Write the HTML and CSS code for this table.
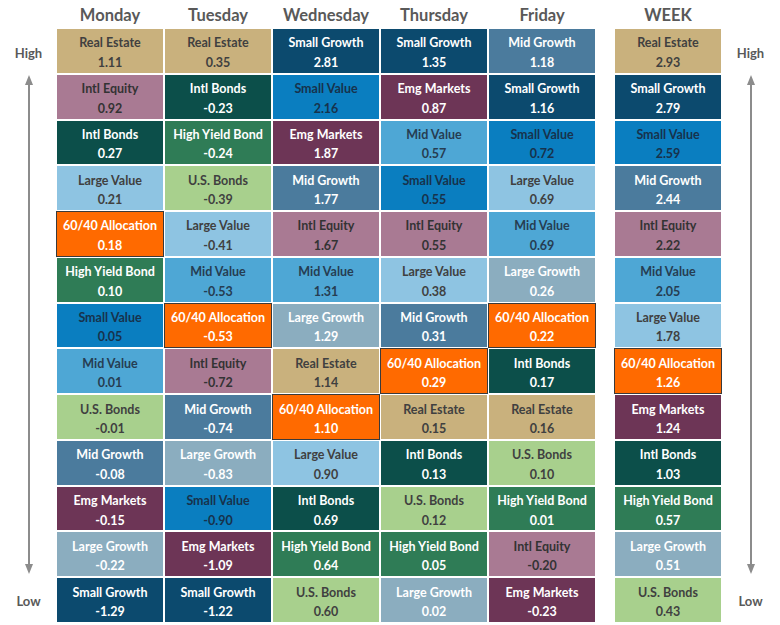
FILE: index.html
```html
<!DOCTYPE html>
<html>
<head>
<meta charset="utf-8">
<link rel="stylesheet" href="styles.css">
</head>
<body>
<div class="board">
  <div class="side">
    <div class="side-label">High</div>
    <div class="arrow"><span class="head up"></span><span class="shaft"></span><span class="head down"></span></div>
    <div class="side-label">Low</div>
  </div>
  <div class="days">
    <div class="col">
      <div class="hdr">Monday</div>
      <div class="cells">
        <div class="cell re"><span>Real Estate</span><span>1.11</span></div>
        <div class="cell ie"><span>Intl Equity</span><span>0.92</span></div>
        <div class="cell ib"><span>Intl Bonds</span><span>0.27</span></div>
        <div class="cell lv"><span>Large Value</span><span>0.21</span></div>
        <div class="cell al"><span>60/40 Allocation</span><span>0.18</span></div>
        <div class="cell hy"><span>High Yield Bond</span><span>0.10</span></div>
        <div class="cell sv"><span>Small Value</span><span>0.05</span></div>
        <div class="cell mv"><span>Mid Value</span><span>0.01</span></div>
        <div class="cell us"><span>U.S. Bonds</span><span>-0.01</span></div>
        <div class="cell mg"><span>Mid Growth</span><span>-0.08</span></div>
        <div class="cell em"><span>Emg Markets</span><span>-0.15</span></div>
        <div class="cell lg"><span>Large Growth</span><span>-0.22</span></div>
        <div class="cell sg"><span>Small Growth</span><span>-1.29</span></div>
      </div>
    </div>
    <div class="col">
      <div class="hdr">Tuesday</div>
      <div class="cells">
        <div class="cell re"><span>Real Estate</span><span>0.35</span></div>
        <div class="cell ib"><span>Intl Bonds</span><span>-0.23</span></div>
        <div class="cell hy"><span>High Yield Bond</span><span>-0.24</span></div>
        <div class="cell us"><span>U.S. Bonds</span><span>-0.39</span></div>
        <div class="cell lv"><span>Large Value</span><span>-0.41</span></div>
        <div class="cell mv"><span>Mid Value</span><span>-0.53</span></div>
        <div class="cell al"><span>60/40 Allocation</span><span>-0.53</span></div>
        <div class="cell ie"><span>Intl Equity</span><span>-0.72</span></div>
        <div class="cell mg"><span>Mid Growth</span><span>-0.74</span></div>
        <div class="cell lg"><span>Large Growth</span><span>-0.83</span></div>
        <div class="cell sv"><span>Small Value</span><span>-0.90</span></div>
        <div class="cell em"><span>Emg Markets</span><span>-1.09</span></div>
        <div class="cell sg"><span>Small Growth</span><span>-1.22</span></div>
      </div>
    </div>
    <div class="col">
      <div class="hdr">Wednesday</div>
      <div class="cells">
        <div class="cell sg"><span>Small Growth</span><span>2.81</span></div>
        <div class="cell sv"><span>Small Value</span><span>2.16</span></div>
        <div class="cell em"><span>Emg Markets</span><span>1.87</span></div>
        <div class="cell mg"><span>Mid Growth</span><span>1.77</span></div>
        <div class="cell ie"><span>Intl Equity</span><span>1.67</span></div>
        <div class="cell mv"><span>Mid Value</span><span>1.31</span></div>
        <div class="cell lg"><span>Large Growth</span><span>1.29</span></div>
        <div class="cell re"><span>Real Estate</span><span>1.14</span></div>
        <div class="cell al"><span>60/40 Allocation</span><span>1.10</span></div>
        <div class="cell lv"><span>Large Value</span><span>0.90</span></div>
        <div class="cell ib"><span>Intl Bonds</span><span>0.69</span></div>
        <div class="cell hy"><span>High Yield Bond</span><span>0.64</span></div>
        <div class="cell us"><span>U.S. Bonds</span><span>0.60</span></div>
      </div>
    </div>
    <div class="col">
      <div class="hdr">Thursday</div>
      <div class="cells">
        <div class="cell sg"><span>Small Growth</span><span>1.35</span></div>
        <div class="cell em"><span>Emg Markets</span><span>0.87</span></div>
        <div class="cell mv"><span>Mid Value</span><span>0.57</span></div>
        <div class="cell sv"><span>Small Value</span><span>0.55</span></div>
        <div class="cell ie"><span>Intl Equity</span><span>0.55</span></div>
        <div class="cell lv"><span>Large Value</span><span>0.38</span></div>
        <div class="cell mg"><span>Mid Growth</span><span>0.31</span></div>
        <div class="cell al"><span>60/40 Allocation</span><span>0.29</span></div>
        <div class="cell re"><span>Real Estate</span><span>0.15</span></div>
        <div class="cell ib"><span>Intl Bonds</span><span>0.13</span></div>
        <div class="cell us"><span>U.S. Bonds</span><span>0.12</span></div>
        <div class="cell hy"><span>High Yield Bond</span><span>0.05</span></div>
        <div class="cell lg"><span>Large Growth</span><span>0.02</span></div>
      </div>
    </div>
    <div class="col">
      <div class="hdr">Friday</div>
      <div class="cells">
        <div class="cell mg"><span>Mid Growth</span><span>1.18</span></div>
        <div class="cell sg"><span>Small Growth</span><span>1.16</span></div>
        <div class="cell sv"><span>Small Value</span><span>0.72</span></div>
        <div class="cell lv"><span>Large Value</span><span>0.69</span></div>
        <div class="cell mv"><span>Mid Value</span><span>0.69</span></div>
        <div class="cell lg"><span>Large Growth</span><span>0.26</span></div>
        <div class="cell al"><span>60/40 Allocation</span><span>0.22</span></div>
        <div class="cell ib"><span>Intl Bonds</span><span>0.17</span></div>
        <div class="cell re"><span>Real Estate</span><span>0.16</span></div>
        <div class="cell us"><span>U.S. Bonds</span><span>0.10</span></div>
        <div class="cell hy"><span>High Yield Bond</span><span>0.01</span></div>
        <div class="cell ie"><span>Intl Equity</span><span>-0.20</span></div>
        <div class="cell em"><span>Emg Markets</span><span>-0.23</span></div>
      </div>
    </div>
  </div>
  <div class="col week">
    <div class="hdr">WEEK</div>
    <div class="cells">
      <div class="cell re"><span>Real Estate</span><span>2.93</span></div>
      <div class="cell sg"><span>Small Growth</span><span>2.79</span></div>
      <div class="cell sv"><span>Small Value</span><span>2.59</span></div>
      <div class="cell mg"><span>Mid Growth</span><span>2.44</span></div>
      <div class="cell ie"><span>Intl Equity</span><span>2.22</span></div>
      <div class="cell mv"><span>Mid Value</span><span>2.05</span></div>
      <div class="cell lv"><span>Large Value</span><span>1.78</span></div>
      <div class="cell al"><span>60/40 Allocation</span><span>1.26</span></div>
      <div class="cell em"><span>Emg Markets</span><span>1.24</span></div>
      <div class="cell ib"><span>Intl Bonds</span><span>1.03</span></div>
      <div class="cell hy"><span>High Yield Bond</span><span>0.57</span></div>
      <div class="cell lg"><span>Large Growth</span><span>0.51</span></div>
      <div class="cell us"><span>U.S. Bonds</span><span>0.43</span></div>
    </div>
  </div>
  <div class="side">
    <div class="side-label">High</div>
    <div class="arrow"><span class="head up"></span><span class="shaft"></span><span class="head down"></span></div>
    <div class="side-label">Low</div>
  </div>
</div>
</body>
</html>
```

FILE: styles.css
```css
* { box-sizing: border-box; }
html, body { margin: 0; padding: 0; background: #fff; }
body {
  width: 780px;
  height: 625px;
  font-family: Lato, "Open Sans", "Liberation Sans", sans-serif;
  font-weight: 700;
  color: #595959;
}
.board {
  display: flex;
  align-items: flex-start;
}
.side {
  width: 57px;
  flex: none;
  height: 622px;
  padding-top: 29px;
  display: flex;
  flex-direction: column;
  align-items: center;
}
.board > .side:last-child { width: 59px; }
.side-label {
  height: 45px;
  flex: none;
  display: flex;
  align-items: center;
  justify-content: center;
  font-size: 13px;
  color: #595959;
  padding-top: 2px;
}
.arrow {
  flex: 1;
  display: flex;
  flex-direction: column;
  align-items: center;
  padding: 1px 0 3px;
}
.shaft {
  flex: 1;
  width: 2px;
  background: #8c8c8c;
}
.head {
  width: 0;
  height: 0;
  border-left: 4.5px solid transparent;
  border-right: 4.5px solid transparent;
}
.head.up { border-bottom: 10px solid #8c8c8c; }
.head.down { border-top: 10px solid #8c8c8c; }
.days {
  display: flex;
  gap: 2px;
  width: 538px;
  flex: none;
}
.col {
  width: 106px;
  flex: none;
  display: flex;
  flex-direction: column;
}
.week {
  margin-left: 20px;
  width: 106px;
}
.hdr {
  height: 29px;
  display: flex;
  align-items: center;
  justify-content: center;
  font-size: 16.5px;
  color: #595959;
  padding-top: 1px;
}
.cells {
  height: 593px;
  display: flex;
  flex-direction: column;
  gap: 2px;
}
.cell {
  flex: 1 1 0;
  min-height: 0;
  display: flex;
  flex-direction: column;
  align-items: center;
  justify-content: center;
  font-size: 12.5px;
  line-height: 19.5px;
  color: #fff;
  padding-top: 4px;
}
.re { background: #c9b17d; color: #404040; }
.ie { background: #a97a93; color: #333333; }
.ib { background: #0c4f4a; }
.lv { background: #8ec4e2; color: #404040; }
.al { background: #ff6a00; box-shadow: 0 0 0 1px #3a3a3a; position: relative; z-index: 1; }
.hy { background: #2f7c56; }
.sv { background: #0a7ec0; color: #17324c; }
.mv { background: #4ea7d5; color: #263d52; }
.us { background: #a8d08d; color: #404040; }
.mg { background: #4b7b9d; }
.em { background: #6d3556; }
.lg { background: #8badbf; }
.sg { background: #0c4a6e; }
```
